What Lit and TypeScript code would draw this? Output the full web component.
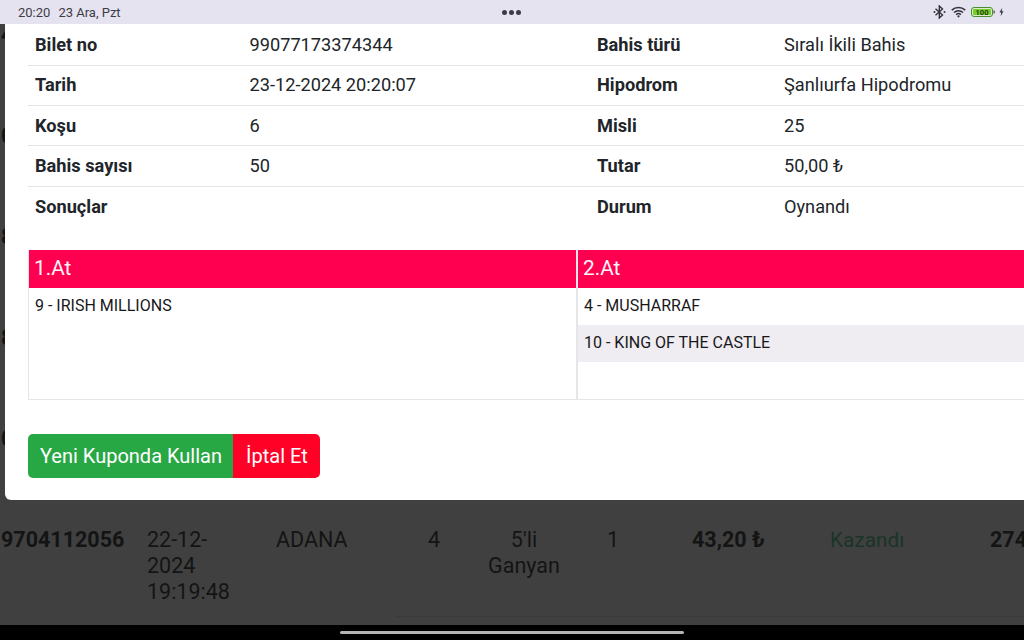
import { LitElement, html, css } from 'lit';
import { customElement } from 'lit/decorators.js';

const INFO = [
  ['Bilet no', '99077173374344', 'Bahis türü', 'Sıralı İkili Bahis'],
  ['Tarih', '23-12-2024 20:20:07', 'Hipodrom', 'Şanlıurfa Hipodromu'],
  ['Koşu', '6', 'Misli', '25'],
  ['Bahis sayısı', '50', 'Tutar', '50,00 ₺'],
  ['Sonuçlar', '', 'Durum', 'Oynandı'],
];

const PICKS = [
  { title: '1.At', horses: ['9 - IRISH MILLIONS'] },
  { title: '2.At', horses: ['4 - MUSHARRAF', '10 - KING OF THE CASTLE'] },
];

// rows of the list behind the dialog, only a sliver of the first digit peeks out
const HIDDEN_ROWS = ['4', '0', '8', '8', '0'];

@customElement('app-root')
export class AppRoot extends LitElement {
  static styles = css`
    :host {
      display: block;
      font-family: Roboto, 'Noto Sans', sans-serif;
    }

    .screen {
      width: 1024px;
      height: 640px;
      display: flex;
      flex-direction: column;
      overflow: hidden;
      background: #404040;
    }

    .status {
      height: 24px;
      flex: none;
      display: grid;
      grid-template-columns: 1fr auto 1fr;
      align-items: center;
      padding: 0 20px 0 18px;
      background: #e6e3f0;
      color: #3d3c46;
      font-size: 13px;
    }

    .clock {
      display: flex;
      gap: 8px;
    }

    .dots {
      display: flex;
      gap: 2px;
      padding-left: 1px;
    }

    .dots i {
      width: 5px;
      height: 5px;
      border-radius: 50%;
      background: #3d3c46;
    }

    .tray {
      display: flex;
      justify-content: flex-end;
      align-items: center;
      gap: 5px;
    }

    .bolt {
      margin-left: -1px;
    }

    .page {
      flex: 1;
      position: relative;
      overflow: hidden;
    }

    .back-list {
      margin-top: -2px;
      width: 1111px;
      color: #141414;
      font-size: 21.5px;
      line-height: 26px;
    }

    .back-row {
      display: grid;
      grid-template-columns: 146px 129px 118px 80px 100px 78px 178px 160px 60px;
      height: 101px;
      padding-left: 1px;
    }

    .back-row .num,
    .back-row .amount {
      font-weight: 700;
      white-space: nowrap;
    }

    .back-row .sliver {
      width: 4px;
      overflow: hidden;
      font-weight: 700;
    }

    .back-row .date {
      padding-right: 30px;
    }

    .back-row .mid {
      text-align: center;
    }

    .back-row .amount {
      padding-left: 40px;
    }

    .back-row .won {
      color: #1a3527;
      font-size: 20.8px;
    }

    .page-line {
      position: absolute;
      left: 396px;
      right: 0;
      top: 592px;
      height: 1px;
      background: #3a3a3a;
    }

    .modal {
      position: absolute;
      left: 5px;
      top: 0;
      width: 1100px;
      height: 476px;
      box-sizing: border-box;
      padding: 1.2px 0 0 23px;
      background: #fff;
      border-radius: 0 0 0 6px;
      color: #212529;
    }

    .info {
      width: 1072px;
      font-size: 18.2px;
    }

    .info-row {
      display: grid;
      grid-template-columns: 214.5px 347.5px 187px 1fr;
      height: 40.4px;
      box-sizing: border-box;
      align-items: center;
      padding: 0 0 1px 7px;
      border-bottom: 1px solid #e4e4e7;
    }

    .info-row:last-child {
      border-bottom: none;
    }

    .picks {
      display: grid;
      grid-template-columns: 548px 1fr;
      width: 1072px;
      height: 150px;
      margin-top: 22.8px;
      box-sizing: border-box;
      border-left: 1px solid #e6e6ea;
      border-bottom: 1px solid #e6e6ea;
    }

    .pick + .pick {
      border-left: 2px solid #e6e6ea;
      margin-left: -1px;
    }

    .pick-head {
      height: 38px;
      padding-left: 5px;
      background: #ff0051;
      color: #fbf4f8;
      font-size: 20.8px;
      line-height: 36px;
    }

    .horse {
      height: 37px;
      padding-left: 6px;
      color: #18181b;
      font-size: 16px;
      line-height: 36px;
    }

    .horse:nth-child(even) {
      background: #efedf1;
    }

    .actions {
      display: flex;
      margin-top: 34px;
    }

    .actions button {
      height: 44px;
      border: none;
      padding: 0 0 0 1px;
      color: #fff;
      font: inherit;
      font-size: 20px;
    }

    .use {
      width: 205px;
      background: #28a745;
      border-radius: 5px 0 0 5px;
    }

    .cancel {
      width: 87px;
      background: #ff0026;
      border-radius: 0 5px 5px 0;
    }

    .nav {
      height: 15px;
      flex: none;
      display: flex;
      justify-content: center;
      align-items: center;
      background: #000;
    }

    .nav i {
      width: 344px;
      height: 3px;
      border-radius: 2px;
      background: #b4b4b4;
    }
  `;

  render() {
    return html`
      <div class="screen">
        <div class="status">
          <div class="clock"><span>20:20</span><span>23 Ara, Pzt</span></div>
          <div class="dots"><i></i><i></i><i></i></div>
          <div class="tray">
            <svg width="13" height="14" viewBox="0 0 13 14" fill="none" stroke="#33323a" stroke-width="1.4">
              <path d="M2.500 3.800 9.500 10l-3.200 3V1l3.200 3-7 6.200" />
              <circle cx="1.500" cy="7" r="1" fill="#33323a" stroke="none" />
              <circle cx="11.500" cy="7" r="1" fill="#33323a" stroke="none" />
            </svg>
            <svg width="15" height="12" viewBox="0 0 16 12" fill="none" stroke="#33323a" stroke-width="1.700">
              <path d="M.8 4a10.500 10.500 0 0 1 14.400 0" />
              <path d="M3.200 6.500a7 7 0 0 1 9.600 0" />
              <path d="M5.500 8.800a3.600 3.600 0 0 1 5 0" />
              <circle cx="8" cy="10.600" r="1.200" fill="#33323a" stroke="none" />
            </svg>
            <svg width="24" height="10" viewBox="0 0 24 10">
              <rect x=".5" y=".5" width="21" height="9" rx="2.500" fill="#dcebc8" stroke="#4c8a2e" />
              <rect x="2" y="2" width="18" height="6" rx="1.200" fill="#74cf2a" />
              <rect x="22.500" y="3.500" width="1.300" height="3" fill="#55525c" />
              <text x="11" y="7.700" text-anchor="middle" font-size="7.500" font-weight="700" fill="#24410f">100</text>
            </svg>
            <svg class="bolt" width="5" height="10" viewBox="0 0 6 10"><path d="M3.800 0 .5 5.600h2L2 10l3.500-6h-2z" fill="#44434c" /></svg>
          </div>
        </div>

        <div class="page">
          <div class="back-list">
            ${HIDDEN_ROWS.map((n) => html`<div class="back-row"><span class="sliver">${n}</span></div>`)}
            <div class="back-row">
              <span class="num">9704112056</span>
              <span class="date">22-12-2024 19:19:48</span>
              <span>ADANA</span>
              <span class="mid">4</span>
              <span class="mid">5'li Ganyan</span>
              <span class="mid">1</span>
              <span class="amount">43,20 ₺</span>
              <span class="won">Kazandı</span>
              <span class="num">274,00 ₺</span>
            </div>
          </div>
          <div class="page-line"></div>
          <div class="modal">
            <div class="info">
              ${INFO.map(
                ([a, b, c, d]) => html`
                  <div class="info-row"><b>${a}</b><span>${b}</span><b>${c}</b><span>${d}</span></div>
                `
              )}
            </div>
            <div class="picks">
              ${PICKS.map(
                (p) => html`
                  <div class="pick">
                    <div class="pick-head">${p.title}</div>
                    <div class="horses">${p.horses.map((h) => html`<div class="horse">${h}</div>`)}</div>
                  </div>
                `
              )}
            </div>
            <div class="actions">
              <button class="use">Yeni Kuponda Kullan</button>
              <button class="cancel">İptal Et</button>
            </div>
          </div>
        </div>

        <div class="nav"><i></i></div>
      </div>
    `;
  }
}
